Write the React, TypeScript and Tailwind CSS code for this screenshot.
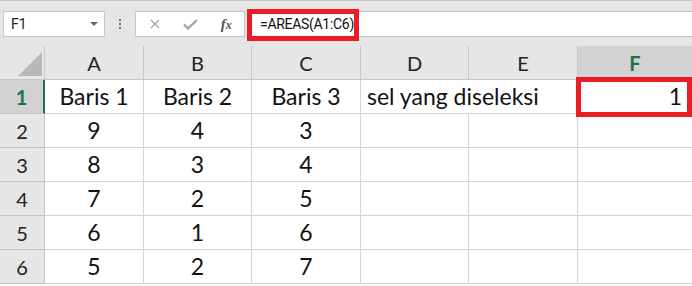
const rows: string[][] = [
  ["Baris 1", "Baris 2", "Baris 3", "sel yang diseleksi", "", "1"],
  ["9", "4", "3", "", "", ""],
  ["8", "3", "4", "", "", ""],
  ["7", "2", "5", "", "", ""],
  ["6", "1", "6", "", "", ""],
  ["5", "2", "7", "", "", ""],
];

const cols = ["A", "B", "C", "D", "E", "F"];

function Toolbar() {
  return (
    <div className="relative flex h-[46px] items-start border-t border-[#c6c6c6] bg-[#e6e6e6] pl-[3px] pt-[10px] font-['Roboto',sans-serif]">
      {/* Name box */}
      <div className="flex h-[26px] w-[102px] items-center justify-between border border-[#c6c6c6] bg-white pl-[7px] pr-[6px] text-[14px] text-[#222]">
        <span>F1</span>
        <svg width="8" height="4" viewBox="0 0 8 4">
          <polygon points="0,0 8,0 4,4" fill="#666" />
        </svg>
      </div>

      {/* Grip */}
      <div className="flex h-[26px] w-[30px] flex-col items-center justify-center gap-[2px]">
        <span className="h-[2px] w-[2px] bg-[#777]" />
        <span className="h-[2px] w-[2px] bg-[#777]" />
        <span className="h-[2px] w-[2px] bg-[#777]" />
      </div>

      {/* Cancel / enter / fx */}
      <div className="flex h-[26px] w-[110px] items-center border border-[#c6c6c6] bg-white">
        <div className="flex w-[38px] justify-center">
          <svg width="10" height="10" viewBox="0 0 10 10">
            <path d="M1 1L9 9M9 1L1 9" stroke="#a6a6a6" strokeWidth="1.4" />
          </svg>
        </div>
        <div className="flex w-[36px] justify-center">
          <svg width="15" height="11" viewBox="0 0 15 11">
            <path d="M1 5.5L5 9.5L14 1" stroke="#a6a6a6" strokeWidth="2.4" fill="none" />
          </svg>
        </div>
        <div className="flex w-[36px] justify-center">
          <span className="font-['Liberation_Serif',serif] text-[15px] font-bold italic leading-none text-[#555]">
            f<span className="text-[12px]">x</span>
          </span>
        </div>
      </div>

      {/* Formula input */}
      <div className="relative ml-[2px] flex h-[26px] flex-1 items-center border-y border-[#c6c6c6] bg-white pl-[13px] text-[14px] text-[#111]">
        <span className="tracking-[-0.3px]">=AREAS(A1:C6)</span>
        <div className="absolute left-0 top-[-3px] h-[32px] w-[112px] border-[5px] border-[#ed1c24]" />
      </div>
    </div>
  );
}

export default function App() {
  return (
    <div className="h-[286px] w-[692px] overflow-hidden bg-white font-['Lato',sans-serif]">
      <Toolbar />

      <div className="grid grid-cols-[45px_99px_108px_109px_108px_109px_1fr]">
        {/* Header row */}
        <div className="relative h-[34px] border-b border-r border-[#c6c6c6] bg-[#e6e6e6]">
          <svg className="absolute left-[18px] top-[6px]" width="24" height="24" viewBox="0 0 24 24">
            <polygon points="24,0 24,24 0,24" fill="#b8b8b8" />
          </svg>
        </div>
        {cols.map((c) => (
          <div
            key={c}
            className={
              c === "F"
                ? "flex h-[34px] items-center justify-center border-b border-[#c6c6c6] bg-[#d2d2d2] text-[20px] font-bold text-[#217346]"
                : "flex h-[34px] items-center justify-center border-b border-r border-[#c6c6c6] bg-[#e6e6e6] text-[20px] text-[#222]"
            }
          >
            {c}
          </div>
        ))}

        {rows.map((r, i) => (
          <div key={i} className="contents">
            <div
              className={
                i === 0
                  ? "flex h-[34px] items-center justify-center border-b border-r-2 border-b-[#c6c6c6] border-r-[#217346] bg-[#d2d2d2] text-[20px] font-bold text-[#217346]"
                  : "flex h-[34px] items-center justify-center border-b border-r border-[#c6c6c6] bg-[#e6e6e6] text-[20px] text-[#222]"
              }
            >
              {i + 1}
            </div>
            {r.map((v, j) => {
              if (j === 3) {
                return (
                  <div
                    key={j}
                    className={
                      i === 0
                        ? "flex h-[34px] items-center overflow-visible whitespace-nowrap border-b border-[#d4d4d4] pl-[6px] text-[23px] text-[#111]"
                        : "h-[34px] border-b border-r border-[#d4d4d4]"
                    }
                  >
                    {v}
                  </div>
                );
              }
              if (j === 5) {
                return (
                  <div key={j} className="relative flex h-[34px] items-center justify-end border-b border-[#d4d4d4] pr-[10px] text-[23px] text-[#111]">
                    {v}
                    {i === 0 && (
                      <div className="absolute left-[-2px] right-0 top-[-3px] h-[40px] border-[5px] border-[#ed1c24]" />
                    )}
                  </div>
                );
              }
              return (
                <div key={j} className="flex h-[34px] items-center justify-center border-b border-r border-[#d4d4d4] text-[23px] text-[#111]">
                  {v}
                </div>
              );
            })}
          </div>
        ))}
      </div>
    </div>
  );
}
